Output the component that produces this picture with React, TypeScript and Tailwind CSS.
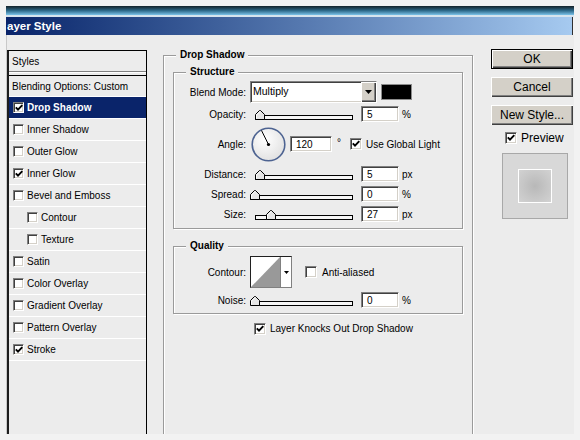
import React from "react";

const sunken =
  "border border-t-[#808080] border-l-[#808080] border-b-white border-r-white shadow-[inset_1px_1px_0_#404040,inset_-1px_-1px_0_#d4d0c8]";
const raised =
  "bg-[#d4d0c8] shadow-[inset_1px_1px_0_#ffffff,inset_-1px_-1px_0_#404040,inset_-2px_-2px_0_#808080]";

function Check({ checked, small }: { checked?: boolean; small?: boolean }) {
  return (
    <span
      className={`inline-flex items-center justify-center shrink-0 bg-white ${sunken} ${
        small ? "w-[11px] h-[11px]" : "w-[12px] h-[12px]"
      }`}
    >
      {checked && (
        <svg width="8" height="8" viewBox="0 0 8 8" className="block">
          <path d="M0.8 3.4 L3 5.7 L7.3 1.2" fill="none" stroke="#000" strokeWidth="1.9" />
        </svg>
      )}
    </span>
  );
}

function Slider({ track, thumb }: { track: string; thumb: string }) {
  return (
    <div className="relative w-[103px] h-[16px] shrink-0">
      <div className={`absolute top-[9px] h-[5px] right-0 border border-black bg-[#f6f6f6] ${track}`} />
      <svg className={`absolute top-[4px] ${thumb}`} width="10" height="10" viewBox="0 0 10 10">
        <polygon
          points="0.5,9.5 0.5,4.5 4.5,0.5 5.5,0.5 9.5,4.5 9.5,9.5"
          fill="#e6e6e6"
          stroke="#000"
          strokeWidth="1"
        />
        <polyline points="1.5,8.5 1.5,5 5,1.5" fill="none" stroke="#fff" strokeWidth="1" />
      </svg>
    </div>
  );
}

function Field({ value, w }: { value: string; w: string }) {
  return (
    <div className={`flex items-center h-[16px] shrink-0 bg-white pl-[5px] ${sunken} ${w}`}>{value}</div>
  );
}

function Label({ children }: { children: React.ReactNode }) {
  return <div className="w-[72px] shrink-0 text-right">{children}</div>;
}

function Group({
  label,
  className,
  children,
}: {
  label: string;
  className: string;
  children?: React.ReactNode;
}) {
  return (
    <div
      className={`relative border border-[#9a9a9a] shadow-[inset_1px_1px_0_#ffffff,1px_1px_0_#ffffff] ${className}`}
    >
      <span className="absolute -top-[7px] left-[12px] bg-[#ececec] px-[4px] font-bold text-[10px] leading-[12px] whitespace-nowrap">
        {label}
      </span>
      {children}
    </div>
  );
}

const styles: { name: string; checked?: boolean; indent?: boolean; active?: boolean }[] = [
  { name: "Drop Shadow", checked: true, active: true },
  { name: "Inner Shadow" },
  { name: "Outer Glow" },
  { name: "Inner Glow", checked: true },
  { name: "Bevel and Emboss" },
  { name: "Contour", indent: true },
  { name: "Texture", indent: true },
  { name: "Satin" },
  { name: "Color Overlay" },
  { name: "Gradient Overlay" },
  { name: "Pattern Overlay" },
  { name: "Stroke", checked: true },
];

export default function App() {
  return (
    <div className="w-[580px] h-[440px] overflow-hidden bg-[#f2f2f2] pt-[6px] pl-[6px] font-['Liberation_Sans',Arial,sans-serif] text-[10px] text-black">
      <div className="w-[568px] h-[428px] flex flex-col bg-[#ececec] overflow-hidden">
        {/* window chrome */}
        <div className="h-[9px] shrink-0 bg-gradient-to-b from-[#13222a] via-[#2c6888] to-[#7cc4ea]" />
        <div className="h-[2px] shrink-0 bg-[#d6e4ee]" />
        <div className="h-[18px] shrink-0 flex">
          <div className="flex-1 flex items-center pl-[1px] bg-gradient-to-r from-[#0a246a] to-[#a6caf0] text-white font-bold text-[11.5px] leading-[18px]">
            ayer Style
          </div>
          <div className="w-[2px] bg-[#f4f4f4] border-l border-[#303030]" />
        </div>

        {/* body */}
        <div className="flex-1 flex items-start border-l border-[#c9c9c9]">
          {/* styles list */}
          <div className="mt-[15px] w-[140px] h-[400px] shrink-0 flex flex-col border-l-2 border-l-[#1e1e1e] border-r border-r-black border-t border-t-black">
            <div className="h-[20px] flex items-center pl-[3px]">Styles</div>
            <div className="h-px bg-[#808080]" />
            <div className="h-px bg-white" />
            <div className="h-[2px]" />
            <div className="h-px bg-black" />
            <div className="h-[21px] flex items-center pl-[3px] border-b border-white">
              Blending Options: Custom
            </div>
            {styles.map((s) => (
              <div
                key={s.name}
                className={`h-[22px] flex items-center gap-[3px] border-b border-white ${
                  s.indent ? "pl-[18px]" : "pl-[4px]"
                } ${s.active ? "bg-[#0a246a] text-white font-bold" : ""}`}
              >
                <Check checked={s.checked} small />
                <span>{s.name}</span>
              </div>
            ))}
          </div>

          {/* Drop Shadow group */}
          <Group label="Drop Shadow" className="ml-[16px] mt-[20px] w-[310px] h-[420px] shrink-0">
            <div className="flex flex-col pl-[9px] pt-[16px]">
              <Group label="Structure" className="w-[290px] h-[157px]">
                <div className="flex flex-col pt-[8px]">
                  <div className="h-[22px] flex items-center">
                    <Label>Blend Mode:</Label>
                    <div className={`ml-[4px] w-[127px] h-[22px] flex bg-white ${sunken}`}>
                      <div className="flex-1 flex items-center pl-[2px] text-[10.5px]">Multiply</div>
                      <div className={`w-[15px] h-full flex items-center justify-center ${raised}`}>
                        <svg width="7" height="4" viewBox="0 0 7 4">
                          <polygon points="0,0 7,0 3.5,4" fill="#000" />
                        </svg>
                      </div>
                    </div>
                    <div className="ml-[4px] w-[31px] h-[16px] bg-black border border-[#8c8c8c]" />
                  </div>

                  <div className="mt-[3px] h-[16px] flex items-center">
                    <Label>Opacity:</Label>
                    <div className="ml-[4px]">
                      <Slider track="left-[5px]" thumb="left-[5px]" />
                    </div>
                    <div className="ml-[8px]">
                      <Field value="5" w="w-[38px]" />
                    </div>
                    <span className="ml-[3px]">%</span>
                  </div>

                  <div className="mt-[5px] h-[34px] flex items-center">
                    <Label>Angle:</Label>
                    <svg className="ml-[5px] shrink-0" width="35" height="35" viewBox="0 0 35 35">
                      <defs>
                        <radialGradient id="dialg" cx="40%" cy="35%" r="70%">
                          <stop offset="0" stopColor="#ffffff" />
                          <stop offset="1" stopColor="#e0e0e0" />
                        </radialGradient>
                      </defs>
                      <circle cx="17.5" cy="17.5" r="16.3" fill="url(#dialg)" stroke="#4d6391" strokeWidth="1.6" />
                      <line x1="17.5" y1="17.5" x2="10.5" y2="3.5" stroke="#000" strokeWidth="1" />
                      <circle cx="17.5" cy="17.5" r="1.6" fill="#000" />
                    </svg>
                    <div className="ml-[4px]">
                      <Field value="120" w="w-[42px]" />
                    </div>
                    <span className="ml-[5px] -mt-[4px]">°</span>
                    <div className="ml-[9px] flex items-center gap-[4px]">
                      <Check checked />
                      <span>Use Global Light</span>
                    </div>
                  </div>

                  <div className="mt-[5px] h-[16px] flex items-center">
                    <Label>Distance:</Label>
                    <div className="ml-[4px]">
                      <Slider track="left-[5px]" thumb="left-[5px]" />
                    </div>
                    <div className="ml-[8px]">
                      <Field value="5" w="w-[38px]" />
                    </div>
                    <span className="ml-[3px]">px</span>
                  </div>

                  <div className="mt-[4px] h-[16px] flex items-center">
                    <Label>Spread:</Label>
                    <div className="ml-[4px]">
                      <Slider track="left-[0px]" thumb="left-[0px]" />
                    </div>
                    <div className="ml-[8px]">
                      <Field value="0" w="w-[38px]" />
                    </div>
                    <span className="ml-[3px]">%</span>
                  </div>

                  <div className="mt-[4px] h-[16px] flex items-center">
                    <Label>Size:</Label>
                    <div className="ml-[4px]">
                      <Slider track="left-[5px]" thumb="left-[16px]" />
                    </div>
                    <div className="ml-[8px]">
                      <Field value="27" w="w-[38px]" />
                    </div>
                    <span className="ml-[3px]">px</span>
                  </div>
                </div>
              </Group>

              <Group label="Quality" className="mt-[17px] w-[290px] h-[68px]">
                <div className="flex flex-col pt-[9px]">
                  <div className="h-[32px] flex items-center">
                    <Label>Contour:</Label>
                    <div className="ml-[4px] w-[42px] h-[32px] flex border border-t-[#202020] border-l-[#202020] border-b-[#808080] border-r-[#808080] bg-white">
                      <svg width="29" height="30" viewBox="0 0 29 30" className="block shrink-0">
                        <rect x="0" y="0" width="29" height="30" fill="#ffffff" />
                        <polygon points="0,30 29,0 29,30" fill="#999999" />
                      </svg>
                      <div className="flex-1 flex items-center justify-center border-l border-[#808080]">
                        <svg width="5" height="3" viewBox="0 0 5 3">
                          <polygon points="0,0 5,0 2.5,3" fill="#000" />
                        </svg>
                      </div>
                    </div>
                    <div className="ml-[13px] flex items-center gap-[5px]">
                      <Check />
                      <span>Anti-aliased</span>
                    </div>
                  </div>

                  <div className="mt-[4px] h-[16px] flex items-center">
                    <Label>Noise:</Label>
                    <div className="ml-[4px]">
                      <Slider track="left-[2px]" thumb="left-[0px]" />
                    </div>
                    <div className="ml-[8px]">
                      <Field value="0" w="w-[38px]" />
                    </div>
                    <span className="ml-[3px]">%</span>
                  </div>
                </div>
              </Group>

              <div className="mt-[9px] h-[12px] flex items-center leading-[12px]">
                <div className="ml-[81px] flex items-center gap-[4px]">
                  <Check checked />
                  <span>Layer Knocks Out Drop Shadow</span>
                </div>
              </div>
            </div>
          </Group>

          {/* buttons */}
          <div className="ml-[18px] mt-[14px] w-[82px] shrink-0 flex flex-col text-[12px]">
            <div className={`h-[20px] flex items-center justify-center border border-black ${raised}`}>OK</div>
            <div className={`mt-[8px] h-[20px] flex items-center justify-center ${raised}`}>Cancel</div>
            <div className={`mt-[8px] h-[20px] flex items-center justify-center ${raised}`}>New Style...</div>
            <div className="mt-[7px] ml-[14px] h-[12px] leading-[12px] flex items-center gap-[4px]">
              <Check checked />
              <span>Preview</span>
            </div>
            <div className="mt-[9px] ml-[11px] w-[66px] h-[66px] flex items-center justify-center bg-[#d8d8d8] border border-[#a8a8a8]">
              <div className="w-[34px] h-[34px] border border-white bg-[radial-gradient(circle,#b8b8b8_0%,#c8c8c8_60%,#d2d2d2_100%)]" />
            </div>
          </div>
        </div>
      </div>
    </div>
  );
}
